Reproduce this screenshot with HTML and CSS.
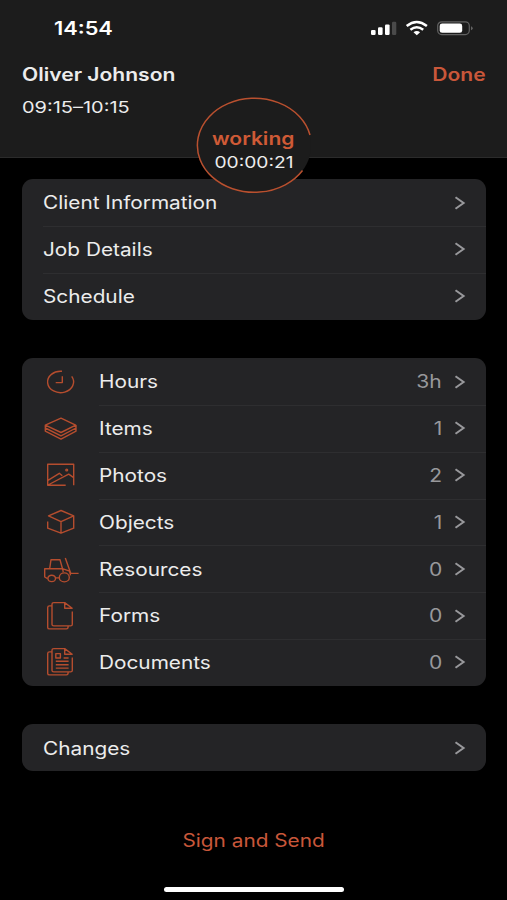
FILE: index.html
```html
<!DOCTYPE html>
<html lang="en">
<head>
<meta charset="utf-8">
<title>Job</title>
<link rel="stylesheet" href="styles.css">
</head>
<body>
<svg class="defs" aria-hidden="true"><symbol id="chev" viewBox="0 0 12 16"><path d="M1.5 2.2 9.6 8 1.5 13.8"/></symbol></svg>
<header class="header">
  <div class="status">
    <span class="clock wide">14:54</span>
    <svg class="indicators" width="106" height="18" viewBox="0 0 106 18">
      <g fill="#fff"><rect x="1" y="10.9" width="4.6" height="5" rx="1.2"/><rect x="8" y="8.2" width="4.6" height="7.7" rx="1.2"/><rect x="15" y="5.4" width="4.6" height="10.5" rx="1.2"/></g>
      <rect x="22" y="2.7" width="4.3" height="13.2" rx="1.2" fill="#4a4a4a"/>
      <g fill="none" stroke="#fff" stroke-width="2.5"><path d="M36.7 7q10-8 20.2 0"/><path d="M40.4 10.7q6.4-5 12.8 0"/></g>
      <path d="M43.5 13.2q3.3-2.4 6.6 0L46.8 16.2z" fill="#fff"/>
      <rect x="67.7" y="2.8" width="31.6" height="12.8" rx="4" fill="none" stroke="#626262" stroke-width="1.2"/>
      <rect x="69.7" y="4.6" width="22.5" height="9.2" rx="2.4" fill="#fff"/>
      <path d="M101 7.2v4q1.7-.6 1.7-2T101 7.2z" fill="#626262"/>
    </svg>
  </div>
  <div class="title"><span class="name wide">Oliver Johnson</span><span class="done wide">Done</span></div>
  <div class="time wide">09:15–10:15</div>
  <div class="timer">
    <svg class="ring" width="118" height="98" viewBox="0 0 118 98"><ellipse cx="59" cy="49" rx="57" ry="47" fill="#1c1c1c"/><path d="M115 38A57 47 0 1 0 107.5 73.5" fill="none" stroke="#b9502f" stroke-width="1.5"/></svg>
    <span class="state">working</span>
    <span class="elapsed">00:00:21</span>
  </div>
</header>
<main>
  <section class="card plain">
    <div class="row"><span class="label">Client Information</span><svg class="chev"><use href="#chev"/></svg></div>
    <div class="row"><span class="label">Job Details</span><svg class="chev"><use href="#chev"/></svg></div>
    <div class="row"><span class="label">Schedule</span><svg class="chev"><use href="#chev"/></svg></div>
  </section>
  <section class="card list">
    <div class="row"><svg class="icon" viewBox="0 0 36 32"><path d="M28.7 10.4A13 10.7 0 1 1 19 5.3M19.3 10.3V16.6H12.7"/></svg><span class="label">Hours</span><span class="value">3h</span><svg class="chev"><use href="#chev"/></svg></div>
    <div class="row"><svg class="icon" viewBox="0 0 36 32"><path d="M18 6.1 32.7 13.1 18 20.5 2.3 13.1ZM2.3 13.1V16L18 23.8 33 16V13.1M2.3 16V19.2L18 27.1 33 19.2V16"/></svg><span class="label">Items</span><span class="value">1</span><svg class="chev"><use href="#chev"/></svg></div>
    <div class="row"><svg class="icon" viewBox="0 0 36 32"><path d="M22.7 26.3H4.7V5.3H30.7V26.3M5 21.4 16.3 14.3 19.3 16.8M5 26 25.7 15.2 30.7 18.6"/><circle cx="23.7" cy="11" r=".9"/></svg><span class="label">Photos</span><span class="value">2</span><svg class="chev"><use href="#chev"/></svg></div>
    <div class="row"><svg class="icon" viewBox="0 0 36 32"><path d="M5.5 9.9 18 4.5 30.7 9.9 18 15.6ZM30.7 9.9V22.2L18 27.2V15.6M18 27.2 4.7 22.2V15.4"/></svg><span class="label">Objects</span><span class="value">1</span><svg class="chev"><use href="#chev"/></svg></div>
    <div class="row"><svg class="icon" viewBox="0 0 36 32"><path d="M4.6 25.7 1.7 24V15.7H19.5L26.5 18.2 27.5 22.3M6.7 15.7 8 6.7H17L19.5 15.7 20.3 19M12.4 24.9H16.3M22.3 5 27.8 20.4H35.6"/><ellipse cx="8.7" cy="25.4" rx="3.8" ry="3.2"/><ellipse cx="21.3" cy="24.4" rx="5" ry="4.5"/></svg><span class="label">Resources</span><span class="value">0</span><svg class="chev"><use href="#chev"/></svg></div>
    <div class="row"><svg class="icon" viewBox="0 0 36 32"><path d="M29.3 11.6V24.5Q29.3 25.9 27.5 25.9H10.8Q9 25.9 9 24.5V4Q9 2.6 10.8 2.6H21.7L29.2 8.2H21.7V2.6M9 5.9H6.5Q4.7 5.9 4.7 7.4V27.4Q4.7 28.9 6.5 28.9H23.5Q25.2 28.9 25.2 26"/></svg><span class="label">Forms</span><span class="value">0</span><svg class="chev"><use href="#chev"/></svg></div>
    <div class="row"><svg class="icon" viewBox="0 0 36 32"><path d="M29.3 11.6V24.5Q29.3 25.9 27.5 25.9H10.8Q9 25.9 9 24.5V4Q9 2.6 10.8 2.6H21.7L29.2 8.2H21.7V2.6M9 5.9H6.5Q4.7 5.9 4.7 7.4V27.4Q4.7 28.9 6.5 28.9H23.5Q25.2 28.9 25.2 26M12.8 7.6H17.4V12H12.8ZM20.6 12H25.6M12.8 15.3H25.6M12.8 18.7H25.6M12.8 22.1H25.6"/></svg><span class="label">Documents</span><span class="value">0</span><svg class="chev"><use href="#chev"/></svg></div>
  </section>
  <section class="card plain single">
    <div class="row"><span class="label">Changes</span><svg class="chev"><use href="#chev"/></svg></div>
  </section>
</main>
<footer><span class="sign">Sign and Send</span><div class="home"></div></footer>
</body>
</html>
```
FILE: styles.css
```css
* { box-sizing: border-box; }
body {
  margin: 0;
  height: 900px;
  background: #000;
  color: #ececec;
  font: 18px/22px Inter, sans-serif;
  overflow: hidden;
}
.defs { position: absolute; width: 0; height: 0; }
.header {
  position: relative;
  height: 158px;
  background: #1c1c1c;
  border-bottom: 1px solid #2b2b2b;
  padding-top: 18px;
}
.status { display: flex; justify-content: space-between; height: 22px; padding: 0 31px 0 54px; }
.indicators { margin-top: 1px; }
.wide { transform: scaleX(1.17); transform-origin: left; }
.clock { font-weight: 600; color: #fff; transform: scaleX(1.21); }
.title { display: flex; justify-content: space-between; padding: 0 21px 0 22px; margin-top: 24px; font-weight: 600; }
.done { color: #c9573a; transform-origin: right; }
.time { margin: 11px 0 0 22px; font-size: 16.5px; line-height: 21px; width: 120px; transform: scaleX(1.21); }
.timer {
  position: absolute;
  left: 194.5px;
  top: 97px;
  width: 118px;
  height: 98px;
  display: flex;
  flex-direction: column;
  align-items: center;
  padding-top: 31px;
  z-index: 1;
}
.ring { position: absolute; left: 0; top: 0; }
.state, .elapsed { position: relative; transform: scaleX(1.17); }
.state { color: #cf5a36; font-weight: 600; }
.elapsed { font-size: 16px; line-height: 22px; margin-top: 1px; transform: scaleX(1.2); }
main { padding: 21.3px 21px 0 22px; }
.card { background: #242426; border-radius: 11px; margin-bottom: 38.6px; }
.row { display: flex; align-items: center; height: 46.8px; padding: 0 20px 0 21px; position: relative; }
.row + .row::before {
  content: "";
  position: absolute;
  left: 21px;
  right: 0;
  top: 0;
  height: 1px;
  background: #2e2e30;
}
.list .row + .row::before { left: 77px; }
.label { transform: scaleX(1.155); transform-origin: left; padding-top: 1.6px; }
.icon {
  width: 36px;
  height: 32px;
  margin-right: 19.5px;
  flex: none;
  fill: none;
  stroke: #b54d2e;
  stroke-width: 1.4;
  stroke-linejoin: round;
}
.value { margin-left: auto; margin-right: 12px; padding-top: 1.6px; color: #98989b; transform: scaleX(1.17); transform-origin: right; }
.chev { width: 12px; height: 16px; flex: none; fill: none; stroke: #98989b; stroke-width: 2; }
.plain .chev { margin-left: auto; }
.value + .chev { margin-left: 0; }
footer { display: flex; flex-direction: column; align-items: center; margin-top: 59px; }
.sign { color: #c9573a; transform: scaleX(1.155); }
.home { width: 180px; height: 5.5px; border-radius: 3px; background: #fff; margin-top: 34.5px; }
```
